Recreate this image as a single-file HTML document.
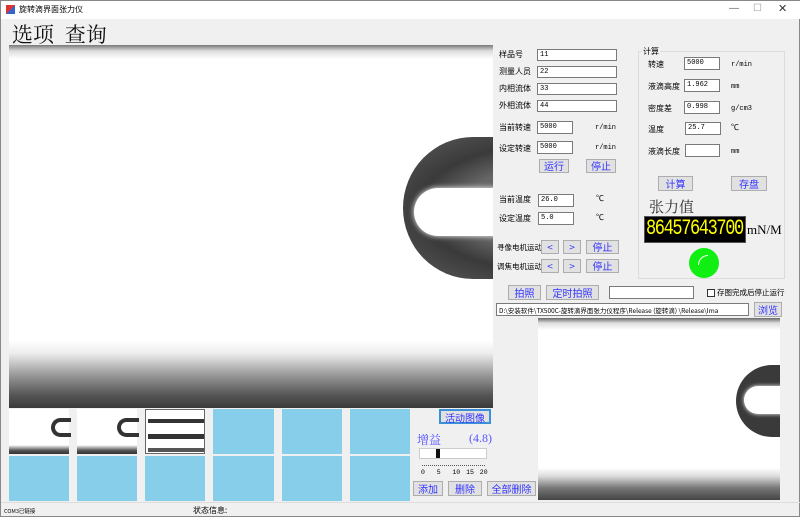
<!DOCTYPE html>
<html><head><meta charset="utf-8"><style>
*{margin:0;padding:0;box-sizing:border-box}
body{width:800px;height:517px;background:#f0f0f0;position:relative;overflow:hidden;font-family:"Liberation Sans","Noto Sans CJK SC",sans-serif;font-size:8px;color:#000;border:1px solid #888}
.a{position:absolute}
.tb{background:#fff;border:1px solid #7a7a7a;font-size:7px;padding:1px 2px;font-family:"Liberation Mono","Noto Sans CJK SC",monospace}
.btn{position:absolute;background:#e1e1e1;border:1px solid #adadad;color:#3333ff;font-size:10px;text-align:center;font-family:"Noto Sans CJK SC",sans-serif}
.lb{position:absolute;font-size:8px;font-family:"Noto Sans CJK SC",sans-serif}
.u{position:absolute;font-size:7px;font-family:"Liberation Mono",monospace}
.t{position:absolute;background:#87ceeb}
</style></head><body>
<div class="a" style="left:0;top:0;width:800px;height:18px;background:#fff"></div>
<div class="a" style="left:5px;top:4px;width:9px;height:9px;background:linear-gradient(135deg,#d33 50%,#36c 50%)"></div>
<div class="lb" style="left:18px;top:3px;font-size:8px">旋转滴界面张力仪</div>
<div class="a" style="left:728px;top:2px;color:#666;font-size:10px">—</div>
<div class="a" style="left:752px;top:2px;color:#999;font-size:10px">☐</div>
<div class="a" style="left:777px;top:1px;color:#333;font-size:11px">✕</div>
<div class="a" style="left:11px;top:18px;font-size:21px;font-family:'Noto Serif CJK SC',serif;color:#111">选项&nbsp;&nbsp;查询</div>
<!-- main image -->
<div class="a" style="left:8px;top:44px;width:484px;height:363px;background:linear-gradient(#777 0,#ddd 6px,#fff 14px,#fff 295px,#eee 308px,#999 330px,#555 350px,#3a3a3a 363px);overflow:hidden">
<div class="a" style="left:394px;top:92px;width:200px;height:142px;border-radius:70px 0 0 70px / 71px 0 0 71px;background:radial-gradient(ellipse at 70% 50%,#666 40%,#3a3a3a 62%,#4a4a4a 80%)"></div>
<div class="a" style="left:405px;top:143px;width:200px;height:48px;border-radius:24px 0 0 24px;background:#fff;box-shadow:0 0 6px #fff"></div>
</div>
<!-- thumbnails -->
<div class="a" style="left:8px;top:408px;width:60px;height:45px;background:linear-gradient(#fff 80%,#555 92%,#333)"><div class="a" style="left:42px;top:9px;width:20px;height:19px;border:4px solid #333;border-right:none;border-radius:10px 0 0 10px"></div></div>
<div class="a" style="left:76px;top:408px;width:60px;height:45px;background:linear-gradient(#fff 80%,#555 92%,#333)"><div class="a" style="left:40px;top:9px;width:22px;height:19px;border:4px solid #333;border-right:none;border-radius:10px 0 0 10px"></div></div>
<div class="a" style="left:144px;top:408px;width:60px;height:45px;background:#fff;border:1px solid #666"><div class="a" style="left:2px;top:9px;width:56px;height:4px;background:#333"></div><div class="a" style="left:2px;top:24px;width:56px;height:5px;background:#333"></div><div class="a" style="left:2px;top:38px;width:56px;height:4px;background:#555"></div></div>
<div class="t" style="left:212px;top:408px;width:61px;height:45px"></div>
<div class="t" style="left:281px;top:408px;width:60px;height:45px"></div>
<div class="t" style="left:349px;top:408px;width:60px;height:45px"></div>
<div class="t" style="left:8px;top:455px;width:60px;height:45px"></div>
<div class="t" style="left:76px;top:455px;width:60px;height:45px"></div>
<div class="t" style="left:144px;top:455px;width:60px;height:45px"></div>
<div class="t" style="left:212px;top:455px;width:61px;height:45px"></div>
<div class="t" style="left:281px;top:455px;width:60px;height:45px"></div>
<div class="t" style="left:349px;top:455px;width:60px;height:45px"></div>
<!-- left form -->
<div class="lb" style="left:498px;top:48px">样品号</div><div class="a tb" style="left:536px;top:48px;width:80px;height:12px">11</div>
<div class="lb" style="left:498px;top:65px">测量人员</div><div class="a tb" style="left:536px;top:65px;width:80px;height:12px">22</div>
<div class="lb" style="left:498px;top:82px">内相流体</div><div class="a tb" style="left:536px;top:82px;width:80px;height:12px">33</div>
<div class="lb" style="left:498px;top:99px">外相流体</div><div class="a tb" style="left:536px;top:99px;width:80px;height:12px">44</div>
<div class="lb" style="left:498px;top:121px">当前转速</div><div class="a tb" style="left:536px;top:120px;width:36px;height:13px">5000</div><div class="u" style="left:594px;top:123px">r/min</div>
<div class="lb" style="left:498px;top:142px">设定转速</div><div class="a tb" style="left:536px;top:140px;width:36px;height:13px">5000</div><div class="u" style="left:594px;top:143px">r/min</div>
<div class="btn" style="left:538px;top:158px;width:30px;height:14px;line-height:12px">运行</div>
<div class="btn" style="left:585px;top:158px;width:30px;height:14px;line-height:12px">停止</div>
<div class="lb" style="left:498px;top:193px">当前温度</div><div class="a tb" style="left:537px;top:193px;width:36px;height:13px">26.0</div><div class="lb" style="left:595px;top:192px">℃</div>
<div class="lb" style="left:498px;top:212px">设定温度</div><div class="a tb" style="left:537px;top:211px;width:36px;height:13px">5.0</div><div class="lb" style="left:595px;top:211px">℃</div>
<div class="lb" style="left:496px;top:241px;font-size:7.5px">寻像电机运动</div>
<div class="btn" style="left:540px;top:239px;width:18px;height:14px;line-height:12px">&lt;</div>
<div class="btn" style="left:562px;top:239px;width:18px;height:14px;line-height:12px">&gt;</div>
<div class="btn" style="left:585px;top:239px;width:33px;height:14px;line-height:12px">停止</div>
<div class="lb" style="left:496px;top:260px;font-size:7.5px">调焦电机运动</div>
<div class="btn" style="left:540px;top:258px;width:18px;height:14px;line-height:12px">&lt;</div>
<div class="btn" style="left:562px;top:258px;width:18px;height:14px;line-height:12px">&gt;</div>
<div class="btn" style="left:585px;top:258px;width:33px;height:14px;line-height:12px">停止</div>
<!-- group box -->
<div class="a" style="left:637px;top:50px;width:147px;height:228px;border:1px solid #dcdcdc"></div>
<div class="lb" style="left:641px;top:45px;background:#f0f0f0;padding:0 1px">计算</div>
<div class="lb" style="left:647px;top:58px">转速</div><div class="a tb" style="left:683px;top:56px;width:36px;height:13px">5000</div><div class="u" style="left:730px;top:60px">r/min</div>
<div class="lb" style="left:647px;top:80px">液滴高度</div><div class="a tb" style="left:683px;top:78px;width:36px;height:13px">1.962</div><div class="u" style="left:730px;top:82px">mm</div>
<div class="lb" style="left:647px;top:102px">密度差</div><div class="a tb" style="left:683px;top:100px;width:36px;height:13px">0.998</div><div class="u" style="left:730px;top:104px">g/cm3</div>
<div class="lb" style="left:647px;top:123px">温度</div><div class="a tb" style="left:684px;top:121px;width:36px;height:13px">25.7</div><div class="lb" style="left:730px;top:121px">℃</div>
<div class="lb" style="left:647px;top:145px">液滴长度</div><div class="a tb" style="left:684px;top:143px;width:35px;height:13px"></div><div class="u" style="left:730px;top:147px">mm</div>
<div class="btn" style="left:657px;top:175px;width:35px;height:15px;line-height:13px">计算</div>
<div class="btn" style="left:730px;top:175px;width:36px;height:15px;line-height:13px">存盘</div>
<div class="a" style="left:648px;top:195px;font-size:15px;font-family:'Noto Serif CJK SC',serif;color:#333">张力值</div>
<div class="a" style="left:643px;top:215px;width:102px;height:27px;background:#000;border:1px solid #555;overflow:hidden"><div style="color:#ff0;font-family:'Liberation Mono',monospace;font-size:17px;line-height:25px;letter-spacing:-1.4px;transform:scaleY(1.3);white-space:nowrap;padding-left:1px">86457643700</div></div>
<div class="a" style="left:746px;top:221px;font-family:'Liberation Serif',serif;font-size:13px">mN/M</div>
<div class="a" style="left:688px;top:247px;width:30px;height:30px;border-radius:50%;background:#11ee11"></div>
<div class="a" style="left:697px;top:254px;width:10px;height:10px;border-top:1px solid #fff;border-left:1px solid #fff;border-radius:10px 0 0 0"></div>
<!-- capture row -->
<div class="btn" style="left:507px;top:284px;width:33px;height:15px;line-height:13px">拍照</div>
<div class="btn" style="left:545px;top:284px;width:53px;height:15px;line-height:13px">定时拍照</div>
<div class="a tb" style="left:608px;top:285px;width:85px;height:13px"></div>
<div class="a" style="left:706px;top:288px;width:8px;height:8px;border:1px solid #333;background:#fff"></div>
<div class="lb" style="left:716px;top:286px;font-size:7.5px">存图完成后停止运行</div>
<div class="a tb" style="left:495px;top:302px;width:253px;height:13px;font-size:6.5px;white-space:nowrap;overflow:hidden;font-family:'Noto Sans CJK SC',monospace">D:\安装软件\TX500C-旋转滴界面张力仪程序\Release (旋转滴) \Release\Ima</div>
<div class="btn" style="left:753px;top:301px;width:28px;height:15px;line-height:13px">浏览</div>
<!-- right image -->
<div class="a" style="left:537px;top:317px;width:242px;height:182px;background:linear-gradient(#666 0,#ddd 5px,#fff 12px,#fff 150px,#ddd 158px,#777 170px,#444 182px);overflow:hidden">
<div class="a" style="left:198px;top:47px;width:80px;height:72px;border-radius:36px 0 0 36px;background:#3a3a3a"></div>
<div class="a" style="left:206px;top:68px;width:80px;height:28px;border-radius:14px 0 0 14px;background:#fff;box-shadow:0 0 4px #fff"></div>
</div>
<!-- gain -->
<div class="btn" style="left:438px;top:408px;width:52px;height:15px;line-height:13px;border:2px solid #3c8fd9">活动图像</div>
<div class="a" style="left:416px;top:430px;font-size:12px;color:#5555ff;font-family:'Noto Serif CJK SC',serif">增益</div>
<div class="a" style="left:468px;top:430px;font-size:12px;color:#5555ff;font-family:'Liberation Serif',serif">(4.8)</div>
<div class="a" style="left:418px;top:447px;width:68px;height:11px;background:#fff;border:1px solid #ccc"></div>
<div class="a" style="left:435px;top:448px;width:4px;height:9px;background:#111"></div>
<div class="a" style="left:421px;top:461px;width:63px;height:4px;border-bottom:1px dotted #555"></div>
<div class="u" style="left:420px;top:468px;font-size:6.5px;word-spacing:2px">0 &nbsp;5 &nbsp;10 15 20</div>
<div class="btn" style="left:412px;top:480px;width:30px;height:15px;line-height:13px">添加</div>
<div class="btn" style="left:447px;top:480px;width:34px;height:15px;line-height:13px">删除</div>
<div class="btn" style="left:486px;top:480px;width:49px;height:15px;line-height:13px">全部删除</div>
<!-- status -->
<div class="a" style="left:0;top:501px;width:800px;height:1px;background:#ddd"></div>
<div class="lb" style="left:3px;top:506px;font-size:5.5px">COM3已链接</div>
<div class="lb" style="left:192px;top:504px;font-size:8px">状态信息:</div>
</body></html>
